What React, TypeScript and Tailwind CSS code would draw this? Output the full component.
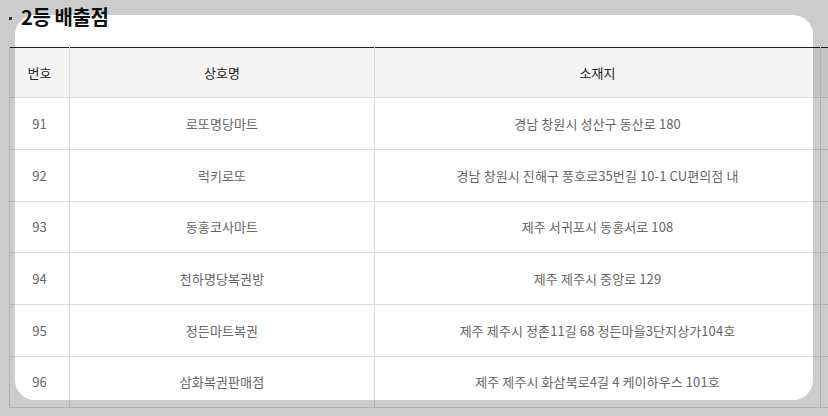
import type { ReactNode } from 'react';

const rows = [
  { no: 91, name: '로또명당마트', addr: '경남 창원시 성산구 동산로 180' },
  { no: 92, name: '럭키로또', addr: '경남 창원시 진해구 풍호로35번길 10-1 CU편의점 내' },
  { no: 93, name: '동홍코사마트', addr: '제주 서귀포시 동홍서로 108' },
  { no: 94, name: '천하명당복권방', addr: '제주 제주시 중앙로 129' },
  { no: 95, name: '정든마트복권', addr: '제주 제주시 정존11길 68 정든마을3단지상가104호' },
  { no: 96, name: '삼화복권판매점', addr: '제주 제주시 화삼북로4길 4 케이하우스 101호' },
];

function Th({ children }: { children?: ReactNode }) {
  return (
    <th className="h-[50px] border-x border-b border-[#dcdcdc] bg-[#f4f4f4] p-0 text-center text-[13px] font-normal text-[#222]">
      {children}
    </th>
  );
}

function Td({ children, h }: { children?: ReactNode; h: string }) {
  return (
    <td className={`${h} border-x border-b border-[#dcdcdc] p-0 text-center text-[13px] tracking-[0.1px] text-[#666]`}>
      {children}
    </td>
  );
}

export default function App() {
  const heights = ['h-[52px]', 'h-[52px]', 'h-[51px]', 'h-[52px]', 'h-[52px]', 'h-[51px]'];
  return (
    <div
      className="relative h-[416px] w-[828px] overflow-hidden bg-white"
      style={{ fontFamily: '"Noto Sans CJK KR", "Noto Sans", sans-serif' }}
    >
      <div className="pl-[9px]">
        <div className="flex h-[47px] items-start pt-[3px]">
          <span className="mt-[14px] h-[3px] w-[3px] bg-[#444]" />
          <h2 className="ml-[9px] text-[20px] font-bold leading-[28px] tracking-[-0.4px] text-[#111]">2등 배출점</h2>
        </div>
        <table className="w-[900px] table-fixed border-collapse border-t border-t-[#222]">
          <colgroup>
            <col className="w-[60px]" />
            <col className="w-[305px]" />
            <col className="w-[446px]" />
            <col className="w-[89px]" />
          </colgroup>
          <thead>
            <tr>
              <Th>번호</Th>
              <Th>상호명</Th>
              <Th>소재지</Th>
              <Th />
            </tr>
          </thead>
          <tbody>
            {rows.map((r, i) => (
              <tr key={r.no}>
                <Td h={heights[i]}>{r.no}</Td>
                <Td h={heights[i]}>{r.name}</Td>
                <Td h={heights[i]}>{r.addr}</Td>
                <Td h={heights[i]} />
              </tr>
            ))}
          </tbody>
        </table>
      </div>

      {/* spotlight overlay */}
      <div className="pointer-events-none absolute left-[15px] top-[15px] h-[385px] w-[798px] rounded-[20px] shadow-[0_0_0_9999px_rgba(0,0,0,0.2)]" />
    </div>
  );
}
